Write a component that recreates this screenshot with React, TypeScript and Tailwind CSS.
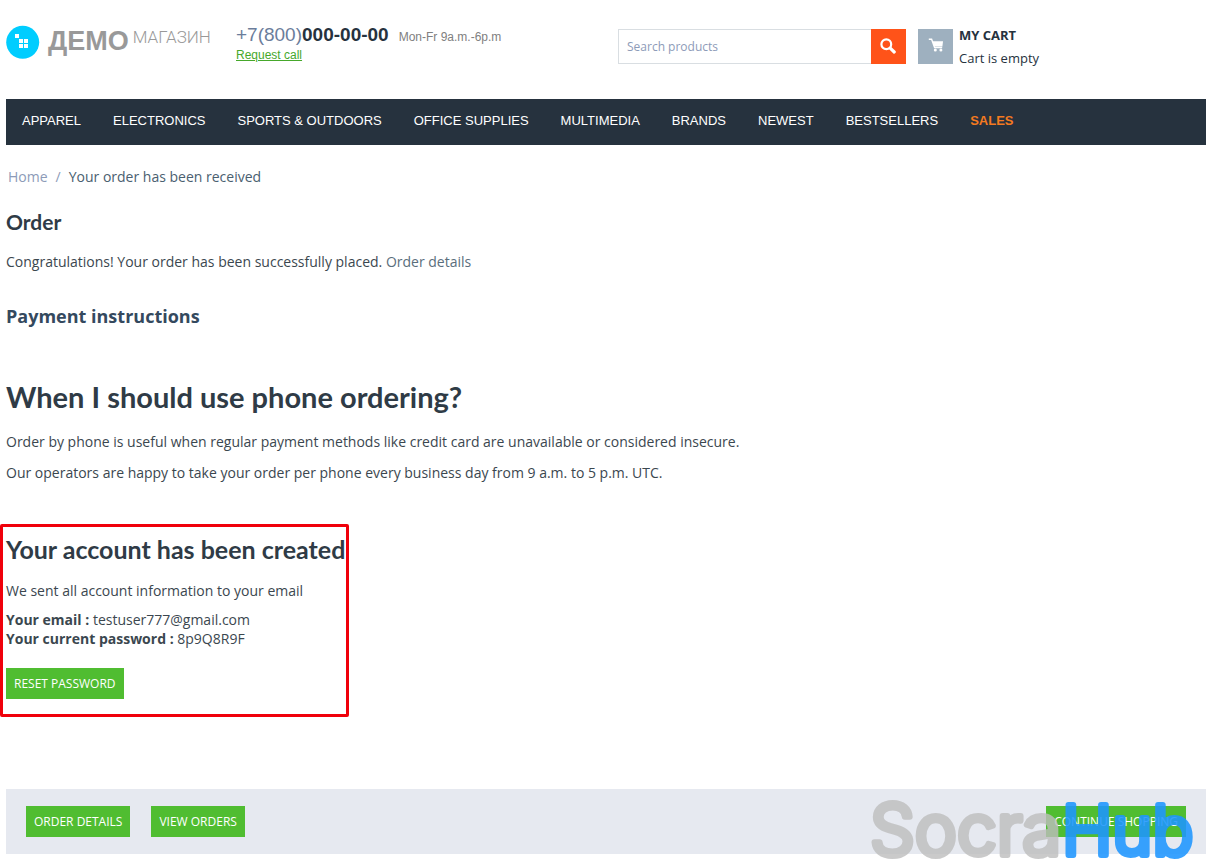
import React from 'react'

const navItems = [
  'Apparel',
  'Electronics',
  'Sports & Outdoors',
  'Office Supplies',
  'Multimedia',
  'Brands',
  'Newest',
  'Bestsellers',
]

const buttonClass =
  "h-[31px] bg-[#50bd31] px-2 font-['Open_Sans',sans-serif] text-[12px] uppercase text-white hover:bg-[#46a82b]"

const headingClass = "font-['Lato',sans-serif] font-bold text-[#2f3b46]"

const Logo = () => (
  <a href="#" className="flex items-start gap-2 font-['Liberation_Sans',sans-serif]">
    <svg viewBox="0 0 34 34" className="h-[34px] w-[34px]" aria-hidden="true">
      <circle cx="16.7" cy="17.3" r="16.5" fill="#00cdff" />
      <g fill="#fff">
        <rect x="9" y="9" width="4" height="4" />
        <rect x="13" y="14" width="4" height="4" />
        <rect x="18" y="14" width="4" height="4" />
        <rect x="13" y="19" width="4" height="4" />
        <rect x="18" y="19" width="4" height="4" />
      </g>
    </svg>
    <span className="flex items-start gap-1">
      <span className="text-[27px] leading-8 font-bold text-[#999]">ДЕМО</span>
      <span className="font-['Roboto',sans-serif] text-[17px] leading-6 font-light text-[#999]">
        МАГАЗИН
      </span>
    </span>
  </a>
)

const Header = () => (
  <header className="flex h-[99px] items-start pt-6">
    <div className="w-[230px] pt-px">
      <Logo />
    </div>
    <div className="w-[382px] pt-px font-['Liberation_Sans',sans-serif]">
      <div className="flex items-baseline gap-[10px]">
        <span className="text-[19px] leading-5 text-[#6b7d9b]">
          +7(800)<b className="text-[#26323e]">000-00-00</b>
        </span>
        <span className="text-[12px] text-[#808080]">Mon-Fr 9a.m.-6p.m</span>
      </div>
      <a href="#" className="block text-[12px] leading-4 text-[#46a82b] underline">
        Request call
      </a>
    </div>
    <form className="mt-[5px] flex h-[35px] w-[288px]">
      <input
        type="text"
        aria-label="Search products"
        placeholder="Search products"
        className="min-w-0 flex-1 border border-r-0 border-[#d9dee2] px-2 text-[12px] placeholder:text-[#8d9bb8]"
      />
      <button
        type="button"
        aria-label="Search"
        className="flex w-[35px] items-center justify-center bg-[#ff5319] pr-px pb-px"
      >
        <svg viewBox="0 0 16 16" className="h-4 w-4" fill="none" stroke="#fff">
          <circle cx="6.3" cy="6.3" r="4.9" strokeWidth="2.2" />
          <path d="M10.2 10.2 14.2 14" strokeWidth="3.2" strokeLinecap="round" />
        </svg>
      </button>
    </form>
    <a href="#" className="ml-3 flex gap-1.5">
      <span className="mt-[5px] flex h-[35px] w-[35px] items-center justify-center bg-[#9eb0bf] pb-1">
        <svg viewBox="0 0 16 14" className="h-3.5 w-4" aria-hidden="true">
          <path d="M.8 1.2h2.8l3 8.3h7.6" fill="none" stroke="#fff" strokeWidth="1.4" />
          <path d="M4.4 3.2H15l-.6 5.3H6.3z" fill="#fff" />
          <circle cx="7.3" cy="12" r="1.5" fill="#fff" />
          <circle cx="12.9" cy="12" r="1.5" fill="#fff" />
        </svg>
      </span>
      <span className="flex flex-col text-[13px] leading-[23px] text-[#26323e]">
        <b className="font-bold uppercase">My cart</b>
        <span>Cart is empty</span>
      </span>
    </a>
  </header>
)

// Brand stamp laid over the page corner
const Watermark = () => (
  <svg
    viewBox="0 0 340 70"
    className="pointer-events-none absolute right-[5px] -bottom-[11px] h-[70px] w-[340px]"
    aria-hidden="true"
  >
    <g
      className="font-['Inter',sans-serif] font-light"
      strokeWidth="6"
      strokeLinejoin="round"
      strokeLinecap="round"
    >
      <text x="9" y="60" className="text-[71px]" fill="#bebebe" stroke="#bebebe" opacity="0.8">
        Socra
      </text>
      <text x="201" y="60" className="text-[68px]" fill="#1e96ff" stroke="#1e96ff" opacity="0.88">
        Hub
      </text>
    </g>
  </svg>
)

const App = () => {
  return (
    <div className="bg-white pr-[9px] pb-[11px] pl-1.5 font-['Open_Sans',sans-serif] text-[14px] leading-5 text-[#3b474f]">
      <Header />

      <nav className="flex h-[46px] gap-8 bg-[#26323e] px-4 pt-3 font-['Liberation_Sans',sans-serif] text-[13px] uppercase text-white">
        {navItems.map((item) => (
          <a key={item} href="#">
            {item}
          </a>
        ))}
        <a href="#" className="font-bold text-[#f47a20]">
          Sales
        </a>
      </nav>

      <main>
        {/* Breadcrumbs */}
        <div className="mt-[22px] flex gap-2 pl-0.5 text-[#8d9bb8]">
          <a href="#">Home</a>
          <span>/</span>
          <span className="text-[#4a6070]">Your order has been received</span>
        </div>

        <h1 className={`mt-[19px] text-[21px] leading-8 ${headingClass}`}>Order</h1>
        <p className="mt-3.5">
          Congratulations! Your order has been successfully placed.{' '}
          <a href="#" className="text-[#5a6e7c]">
            Order details
          </a>
        </p>

        <h2 className="mt-8 text-[18px] leading-6 font-bold text-[#34495e]">
          Payment instructions
        </h2>
        <h2 className={`mt-[49px] text-[29px] leading-10 ${headingClass}`}>
          When I should use phone ordering?
        </h2>
        <p className="mt-[15px]">
          Order by phone is useful when regular payment methods like credit card are unavailable or
          considered insecure.
        </p>
        <p className="mt-[11px]">
          Our operators are happy to take your order per phone every business day from 9 a.m. to 5
          p.m. UTC.
        </p>

        {/* New account */}
        <section className="mt-[41px] -ml-1.5 w-[349px] rounded-xs border-3 border-[#f0000a] pt-1.5 pb-[15px] pl-[3px]">
          <h2 className={`text-[25px] leading-8 whitespace-nowrap ${headingClass}`}>
            Your account has been created
          </h2>
          <p className="mt-4">We sent all account information to your email</p>
          <div className="mt-[9px] leading-[19px]">
            <div>
              <b>Your email :</b> testuser777@gmail.com
            </div>
            <div>
              <b>Your current password :</b> 8p9Q8R9F
            </div>
          </div>
          <button type="button" className={`mt-5 ${buttonClass}`}>
            Reset password
          </button>
        </section>

        {/* Order actions */}
        <div className="relative mt-[72px] flex items-center justify-between bg-[#e6e9f0] px-5 py-[17px]">
          <div className="flex gap-[21px]">
            <button type="button" className={buttonClass}>
              Order details
            </button>
            <button type="button" className={buttonClass}>
              View orders
            </button>
          </div>
          <button type="button" className={buttonClass}>
            Continue shopping
          </button>
          <Watermark />
        </div>
      </main>
    </div>
  )
}

export default App
